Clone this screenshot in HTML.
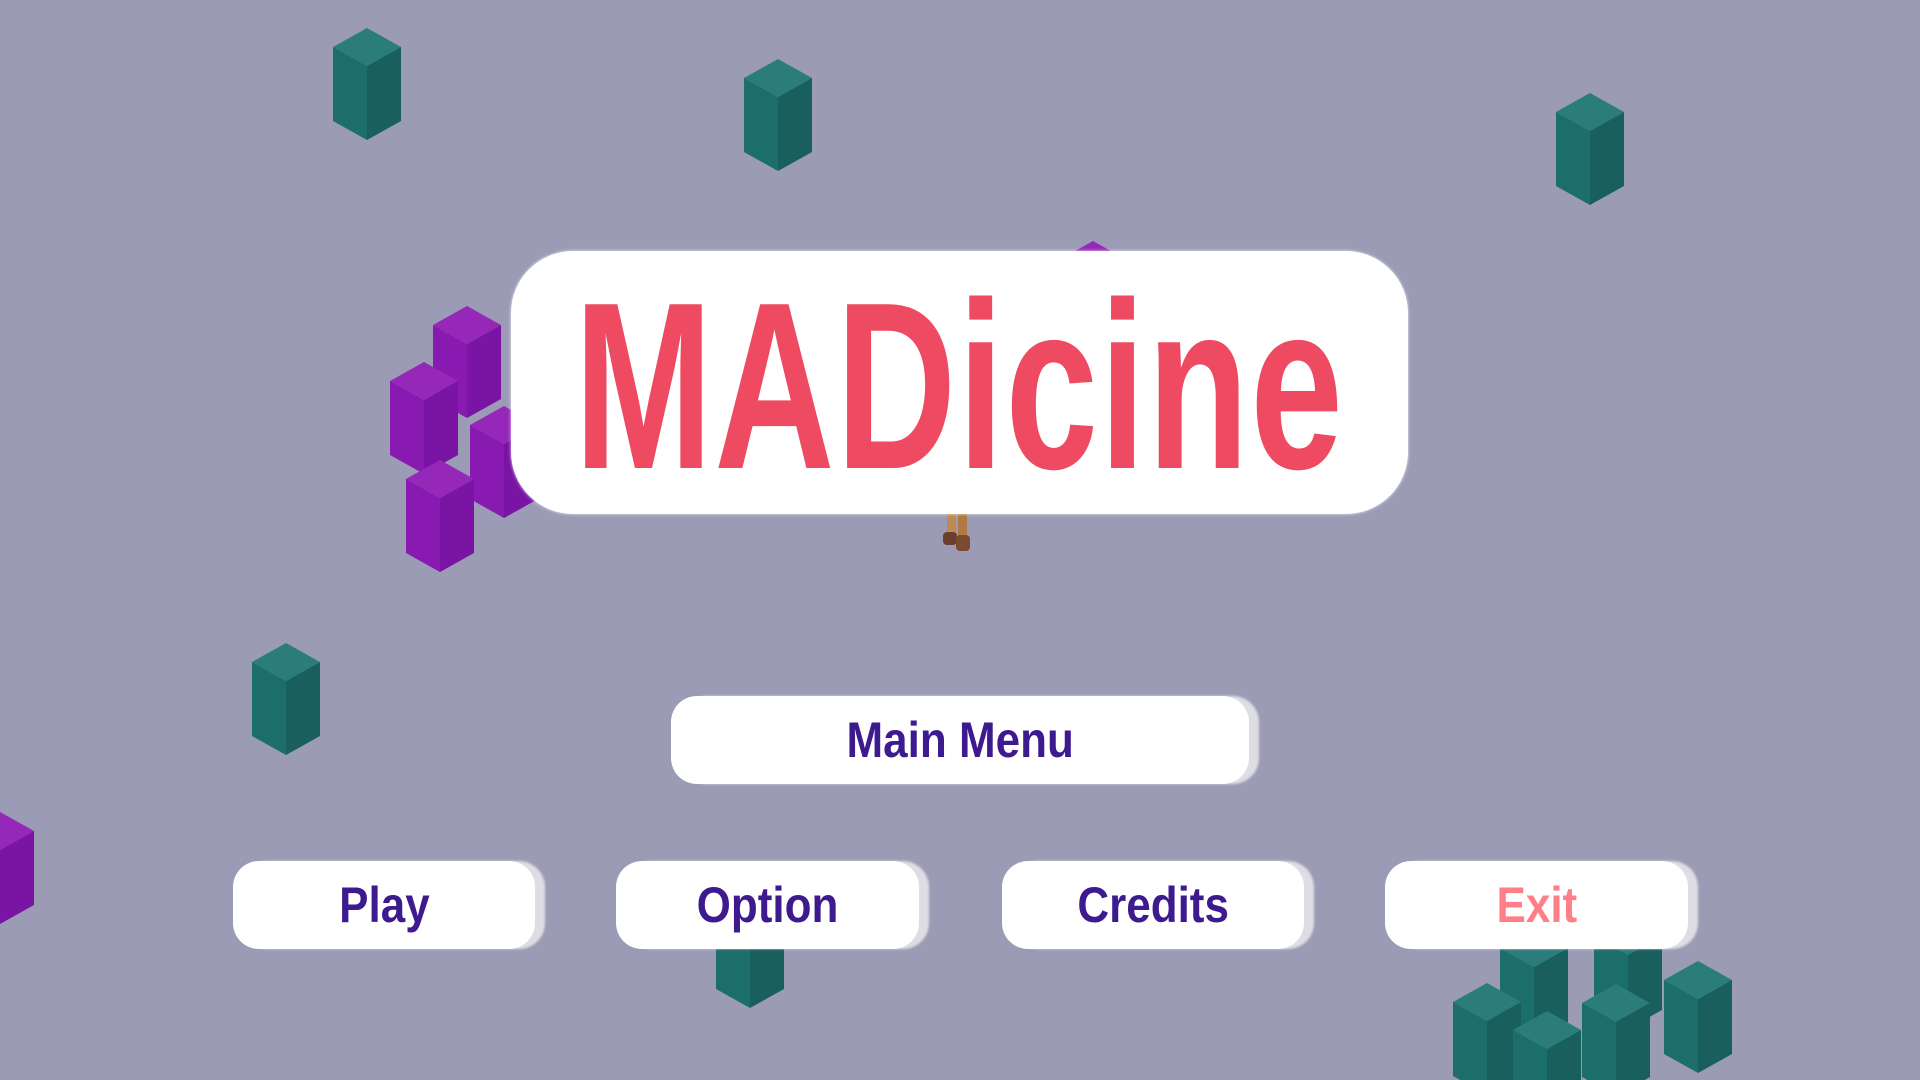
<!DOCTYPE html>
<html><head><meta charset="utf-8"><style>
html,body{margin:0;padding:0}
body{width:1920px;height:1080px;overflow:hidden;background:#9b9bb5;position:relative;font-family:"Liberation Sans",sans-serif}
svg.bg{position:absolute;left:0;top:0}
.box{position:absolute;background:#fff;display:flex;align-items:center;justify-content:center}
.title{left:511px;top:251px;width:897px;height:263px;border-radius:62px;box-shadow:0 0 3px rgba(255,255,255,.8)}
.title span{color:#ee4a62;font-weight:bold;font-size:238px;line-height:1;display:inline-block;transform:scaleX(.70);letter-spacing:2px;margin-top:8px}
.btn{border-radius:26px;box-shadow:10px 0 2px #dedde3}
.btn span{font-weight:bold;font-size:50px;color:#3d1a8e;display:inline-block;transform:scaleX(.88)}
</style></head><body>
<svg class="bg" width="1920" height="1080">
<defs>
<g id="t"><polygon points="0,0 34,19 0,38 -34,19" fill="#2a7d7b"/><polygon points="-34,19 0,38 0,112 -34,93" fill="#1c6e6b"/><polygon points="0,38 34,19 34,93 0,112" fill="#185f5d"/></g>
<g id="p"><polygon points="0,0 34,19 0,38 -34,19" fill="#9628b9"/><polygon points="-34,19 0,38 0,112 -34,93" fill="#8819b1"/><polygon points="0,38 34,19 34,93 0,112" fill="#7914a5"/></g>
</defs>
<use href="#t" x="367" y="28"/>
<use href="#t" x="778" y="59"/>
<use href="#t" x="1590" y="93"/>
<use href="#t" x="286" y="643"/>
<use href="#t" x="750" y="896"/>
<use href="#p" x="467" y="306"/>
<use href="#p" x="504" y="406"/>
<use href="#p" x="424" y="362"/>
<use href="#p" x="440" y="460"/>
<use href="#p" x="0" y="812"/>
<use href="#p" x="1093" y="241"/>
<use href="#t" x="1534" y="929"/>
<use href="#t" x="1628" y="917"/>
<use href="#t" x="1487" y="983"/>
<use href="#t" x="1616" y="984"/>
<use href="#t" x="1547" y="1011"/>
<use href="#t" x="1698" y="961"/>
<g>
<rect x="947" y="514" width="9" height="22" fill="#c08a4e"/><rect x="958" y="514" width="9" height="24" fill="#b07a40"/>
<rect x="943" y="532" width="14" height="13" rx="4" fill="#6b3f2c"/><rect x="956" y="535" width="14" height="16" rx="4" fill="#7a4a33"/>
</g>
</svg>
<div class="box title"><span>MADicine</span></div>
<div class="box btn" style="left:671px;top:696px;width:578px;height:88px"><span>Main Menu</span></div>
<div class="box btn" style="left:233px;top:861px;width:302px;height:88px"><span>Play</span></div>
<div class="box btn" style="left:616px;top:861px;width:303px;height:88px"><span>Option</span></div>
<div class="box btn" style="left:1002px;top:861px;width:302px;height:88px"><span>Credits</span></div>
<div class="box btn" style="left:1385px;top:861px;width:303px;height:88px"><span style="color:#ff7f88">Exit</span></div>
</body></html>
